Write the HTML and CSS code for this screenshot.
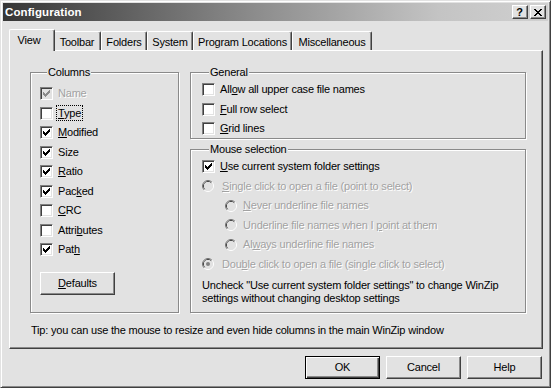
FILE: index.html
```html
<!DOCTYPE html>
<html>
<head>
<meta charset="utf-8">
<title>Configuration</title>
<link rel="stylesheet" href="styles.css">
</head>
<body>
<div class="window">
  <div class="titlebar">
    <span class="title">Configuration</span>
    <div class="caption-buttons">
      <span class="cap-btn help-btn">?</span>
      <span class="cap-btn close-btn">
        <svg width="8" height="7" viewBox="0 0 8 7" shape-rendering="crispEdges">
          <path d="M0 0h2v1H0zM6 0h2v1H6zM1 1h2v1H1zM5 1h2v1H5zM2 2h4v1H2zM3 3h2v1H3zM2 4h4v1H2zM1 5h2v1H1zM5 5h2v1H5zM0 6h2v1H0zM6 6h2v1H6z" fill="#000"/>
        </svg>
      </span>
    </div>
  </div>

  <div class="dialog-body">
    <div class="tabs">
      <div class="tab tab-view selected">View</div>
      <div class="tab tab-toolbar">Toolbar</div>
      <div class="tab tab-folders">Folders</div>
      <div class="tab tab-system">System</div>
      <div class="tab tab-locations">Program Locations</div>
      <div class="tab tab-misc">Miscellaneous</div>
    </div>

    <div class="page">
      <div class="page-main">
        <fieldset class="group group-columns">
          <legend>Columns</legend>
          <div class="rows">
            <div class="row disabled"><span class="check checked"><svg class="tick" width="7" height="7" viewBox="0 0 7 7" shape-rendering="crispEdges"><path d="M0 2h1v1h1v1h1v-1h1v-1h1v-1h1v-1h1v3h-1v1h-1v1h-1v1h-1v1h-1v-1h-1v-1h-1z"/></svg></span><span class="label">Name</span></div>
            <div class="row"><span class="check"></span><span class="label focus"><u>T</u>ype</span></div>
            <div class="row"><span class="check checked"><svg class="tick" width="7" height="7" viewBox="0 0 7 7" shape-rendering="crispEdges"><path d="M0 2h1v1h1v1h1v-1h1v-1h1v-1h1v-1h1v3h-1v1h-1v1h-1v1h-1v1h-1v-1h-1v-1h-1z"/></svg></span><span class="label"><u>M</u>odified</span></div>
            <div class="row"><span class="check checked"><svg class="tick" width="7" height="7" viewBox="0 0 7 7" shape-rendering="crispEdges"><path d="M0 2h1v1h1v1h1v-1h1v-1h1v-1h1v-1h1v3h-1v1h-1v1h-1v1h-1v1h-1v-1h-1v-1h-1z"/></svg></span><span class="label">Size</span></div>
            <div class="row"><span class="check checked"><svg class="tick" width="7" height="7" viewBox="0 0 7 7" shape-rendering="crispEdges"><path d="M0 2h1v1h1v1h1v-1h1v-1h1v-1h1v-1h1v3h-1v1h-1v1h-1v1h-1v1h-1v-1h-1v-1h-1z"/></svg></span><span class="label"><u>R</u>atio</span></div>
            <div class="row"><span class="check checked"><svg class="tick" width="7" height="7" viewBox="0 0 7 7" shape-rendering="crispEdges"><path d="M0 2h1v1h1v1h1v-1h1v-1h1v-1h1v-1h1v3h-1v1h-1v1h-1v1h-1v1h-1v-1h-1v-1h-1z"/></svg></span><span class="label">Pac<u>k</u>ed</span></div>
            <div class="row"><span class="check"></span><span class="label"><u>C</u>RC</span></div>
            <div class="row"><span class="check"></span><span class="label">Attri<u>b</u>utes</span></div>
            <div class="row"><span class="check checked"><svg class="tick" width="7" height="7" viewBox="0 0 7 7" shape-rendering="crispEdges"><path d="M0 2h1v1h1v1h1v-1h1v-1h1v-1h1v-1h1v3h-1v1h-1v1h-1v1h-1v1h-1v-1h-1v-1h-1z"/></svg></span><span class="label">Pat<u>h</u></span></div>
          </div>
          <div class="btn defaults-btn"><span><u>D</u>efaults</span></div>
        </fieldset>

        <div class="right-col">
          <fieldset class="group group-general">
            <legend>General</legend>
            <div class="rows">
              <div class="row"><span class="check"></span><span class="label">All<u>o</u>w all upper case file names</span></div>
              <div class="row"><span class="check"></span><span class="label"><u>F</u>ull row select</span></div>
              <div class="row"><span class="check"></span><span class="label"><u>G</u>rid lines</span></div>
            </div>
          </fieldset>

          <fieldset class="group group-mouse">
            <legend>Mouse selection</legend>
            <div class="rows">
              <div class="row"><span class="check checked"><svg class="tick" width="7" height="7" viewBox="0 0 7 7" shape-rendering="crispEdges"><path d="M0 2h1v1h1v1h1v-1h1v-1h1v-1h1v-1h1v3h-1v1h-1v1h-1v1h-1v1h-1v-1h-1v-1h-1z"/></svg></span><span class="label"><u>U</u>se current system folder settings</span></div>
              <div class="row radio-row disabled">
                <svg class="radio" width="12" height="12" viewBox="0 0 12 12"><circle cx="6" cy="6" r="5.5" fill="none" stroke="#fff"/><path d="M2.1 9.9A5.5 5.5 0 0 1 9.9 2.1" fill="none" stroke="#707070"/><circle cx="6" cy="6" r="4.5" fill="none" stroke="#e2e2e2"/><path d="M2.8 9.2A4.5 4.5 0 0 1 9.2 2.8" fill="none" stroke="#404040"/><circle cx="6" cy="6" r="4" fill="#e2e2e2"/></svg>
                <span class="label"><u>S</u>ingle click to open a file (point to select)</span></div>
              <div class="row radio-row sub disabled">
                <svg class="radio" width="12" height="12" viewBox="0 0 12 12"><circle cx="6" cy="6" r="5.5" fill="none" stroke="#fff"/><path d="M2.1 9.9A5.5 5.5 0 0 1 9.9 2.1" fill="none" stroke="#707070"/><circle cx="6" cy="6" r="4.5" fill="none" stroke="#e2e2e2"/><path d="M2.8 9.2A4.5 4.5 0 0 1 9.2 2.8" fill="none" stroke="#404040"/><circle cx="6" cy="6" r="4" fill="#e2e2e2"/></svg>
                <span class="label"><u>N</u>ever underline file names</span></div>
              <div class="row radio-row sub disabled">
                <svg class="radio" width="12" height="12" viewBox="0 0 12 12"><circle cx="6" cy="6" r="5.5" fill="none" stroke="#fff"/><path d="M2.1 9.9A5.5 5.5 0 0 1 9.9 2.1" fill="none" stroke="#707070"/><circle cx="6" cy="6" r="4.5" fill="none" stroke="#e2e2e2"/><path d="M2.8 9.2A4.5 4.5 0 0 1 9.2 2.8" fill="none" stroke="#404040"/><circle cx="6" cy="6" r="4" fill="#e2e2e2"/></svg>
                <span class="label">Underline file names when I <u>p</u>oint at them</span></div>
              <div class="row radio-row sub disabled">
                <svg class="radio" width="12" height="12" viewBox="0 0 12 12"><circle cx="6" cy="6" r="5.5" fill="none" stroke="#fff"/><path d="M2.1 9.9A5.5 5.5 0 0 1 9.9 2.1" fill="none" stroke="#707070"/><circle cx="6" cy="6" r="4.5" fill="none" stroke="#e2e2e2"/><path d="M2.8 9.2A4.5 4.5 0 0 1 9.2 2.8" fill="none" stroke="#404040"/><circle cx="6" cy="6" r="4" fill="#e2e2e2"/></svg>
                <span class="label">Al<u>w</u>ays underline file names</span></div>
              <div class="row radio-row disabled">
                <svg class="radio" width="12" height="12" viewBox="0 0 12 12"><circle cx="6" cy="6" r="5.5" fill="none" stroke="#fff"/><path d="M2.1 9.9A5.5 5.5 0 0 1 9.9 2.1" fill="none" stroke="#707070"/><circle cx="6" cy="6" r="4.5" fill="none" stroke="#e2e2e2"/><path d="M2.8 9.2A4.5 4.5 0 0 1 9.2 2.8" fill="none" stroke="#404040"/><circle cx="6" cy="6" r="4" fill="#e2e2e2"/><circle cx="6" cy="6" r="2" fill="#808080"/></svg>
                <span class="label">Dou<u>b</u>le click to open a file (single click to select)</span></div>
            </div>
            <p class="note">Uncheck "Use current system folder settings" to change WinZip<br>settings without changing desktop settings</p>
          </fieldset>
        </div>
      </div>
      <div class="tip">Tip: you can use the mouse to resize and even hide columns in the main WinZip window</div>
    </div>

    <div class="buttons">
      <div class="btn default"><span>OK</span></div>
      <div class="btn"><span>Cancel</span></div>
      <div class="btn"><span>Help</span></div>
    </div>
  </div>
</div>
</body>
</html>
```

FILE: styles.css
```css
* { box-sizing: border-box; }

html, body {
  margin: 0;
  padding: 0;
  background: #e2e2e2;
}

body {
  font: 11px/13px "Liberation Sans", Arial, sans-serif;
  letter-spacing: -0.2px;
  color: #000;
}

u {
  text-decoration: underline;
  text-underline-offset: 1px;
  text-decoration-thickness: 1px;
}

.window {
  width: 551px;
  height: 388px;
  background: #e2e2e2;
  border: 1px solid;
  border-color: #e2e2e2 #404040 #404040 #e2e2e2;
  box-shadow: inset 1px 1px 0 #fff, inset -1px -1px 0 #8a8a8a;
  padding: 2px;
  display: flex;
  flex-direction: column;
}

/* ---------- title bar ---------- */
.titlebar {
  height: 18px;
  flex: none;
  display: flex;
  align-items: center;
  padding: 0 2px 0 2px;
  background: linear-gradient(90deg, #363636 0%, #8a8a8a 45%, #c4c4c4 80%, #d0d0d0 100%);
}

.title {
  color: #fff;
  font-weight: bold;
  font-size: 11.5px;
  letter-spacing: 0.1px;
}

.caption-buttons {
  margin-left: auto;
  display: flex;
  gap: 2px;
}

.cap-btn {
  width: 16px;
  height: 14px;
  background: #e2e2e2;
  border: 1px solid;
  border-color: #fff #404040 #404040 #fff;
  box-shadow: inset -1px -1px 0 #8a8a8a;
  display: flex;
  align-items: center;
  justify-content: center;
}

.help-btn {
  font-weight: bold;
  font-size: 11px;
  line-height: 12px;
  letter-spacing: 0;
  padding-right: 1px;
}

.close-btn svg { display: block; margin: 0 1px 0 0; }

/* ---------- body ---------- */
.dialog-body {
  flex: 1;
  display: flex;
  flex-direction: column;
  padding: 8px 5px 0 6px;
}

.tabs {
  height: 21px;
  display: flex;
  align-items: flex-start;
  padding-left: 2px;
  position: relative;
  z-index: 1;
}

.tab {
  height: 19px;
  margin-top: 2px;
  border-top: 1px solid #fff;
  border-left: 1px solid #fff;
  border-right: 1px solid #404040;
  box-shadow: inset -1px 0 0 #8a8a8a;
  border-top-left-radius: 2px;
  border-top-right-radius: 2px;
  background: #e2e2e2;
  text-align: center;
  padding-top: 4px;
  white-space: nowrap;
}

.tab.selected {
  height: 22px;
  margin: 0 -2px;
  position: relative;
  z-index: 2;
}

.tab-view { width: 46px; padding-right: 6px; }
.tab-toolbar { width: 48px; }
.tab-folders { width: 46px; }
.tab-system { width: 46px; }
.tab-locations { width: 99px; }
.tab-misc { width: 80px; }

.page {
  height: 299px;
  border: 1px solid;
  border-color: #fff #404040 #404040 #fff;
  box-shadow: inset -1px -1px 0 #8a8a8a;
  padding: 15px 0 0 20px;
}

.page-main {
  display: grid;
  grid-template-columns: 149px 336px;
  grid-template-rows: 247px;
  column-gap: 11px;
}

/* ---------- group boxes ---------- */
.group {
  margin: 0;
  padding: 0;
  min-width: 0;
  border: 1px solid #8a8a8a;
  box-shadow: 1px 1px 0 #fff, inset 1px 1px 0 #fff;
}

.group legend {
  margin-left: 7px;
  padding: 0 1px;
  height: 12px;
  line-height: 12px;
  background: #e2e2e2;
}

.rows {
  display: flex;
  flex-direction: column;
  gap: 6.5px;
}

.row {
  height: 13px;
  display: flex;
  align-items: center;
  gap: 5px;
  white-space: nowrap;
}

.group-columns { padding: 9px 0 0 9px; }
.group-columns .defaults-btn { margin-top: 16px; }

.right-col {
  display: flex;
  flex-direction: column;
}

.group-general {
  height: 73px;
  flex: none;
  padding: 5px 0 0 11px;
}

.group-mouse {
  flex: 1;
  margin-top: 4px;
  padding: 5px 0 0 11px;
}

/* ---------- checkbox ---------- */
.check {
  width: 13px;
  height: 13px;
  flex: none;
  background: #fff;
  border: 1px solid;
  border-color: #808080 #fff #fff #808080;
  box-shadow: inset 1px 1px 0 #404040, inset -1px -1px 0 #e2e2e2;
  display: flex;
  align-items: center;
  justify-content: center;
}

.tick { display: block; fill: #000; }

.disabled .check { background: #e2e2e2; }
.disabled .tick { fill: #8a8a8a; }

.disabled .label {
  color: #a2a2a2;
  text-shadow: 1px 1px 0 #fff;
}

.focus {
  outline: 1px dotted #000;
  outline-offset: 0;
  padding: 1px 1px 0 1px;
  margin-left: -1px;
  line-height: 13px;
}

/* ---------- radio ---------- */
.radio-row { gap: 8px; }
.radio-row.sub { padding-left: 23px; gap: 6px; }
.radio { display: block; flex: none; }

.note {
  margin: 8px 0 0 0;
  line-height: 13px;
}

.tip {
  margin: 11px 0 0 1px;
}

/* ---------- buttons ---------- */
.btn {
  width: 75px;
  height: 23px;
  flex: none;
  background: #e2e2e2;
  border: 1px solid;
  border-color: #fff #404040 #404040 #fff;
  box-shadow: inset -1px -1px 0 #8a8a8a;
  display: flex;
  align-items: center;
  justify-content: center;
}

.btn.default {
  border-color: #000;
  box-shadow: inset 1px 1px 0 #fff, inset -1px -1px 0 #404040, inset -2px -2px 0 #8a8a8a;
}

.buttons {
  display: flex;
  justify-content: flex-end;
  gap: 6px;
  margin: 7px 1px 0 0;
}
```
